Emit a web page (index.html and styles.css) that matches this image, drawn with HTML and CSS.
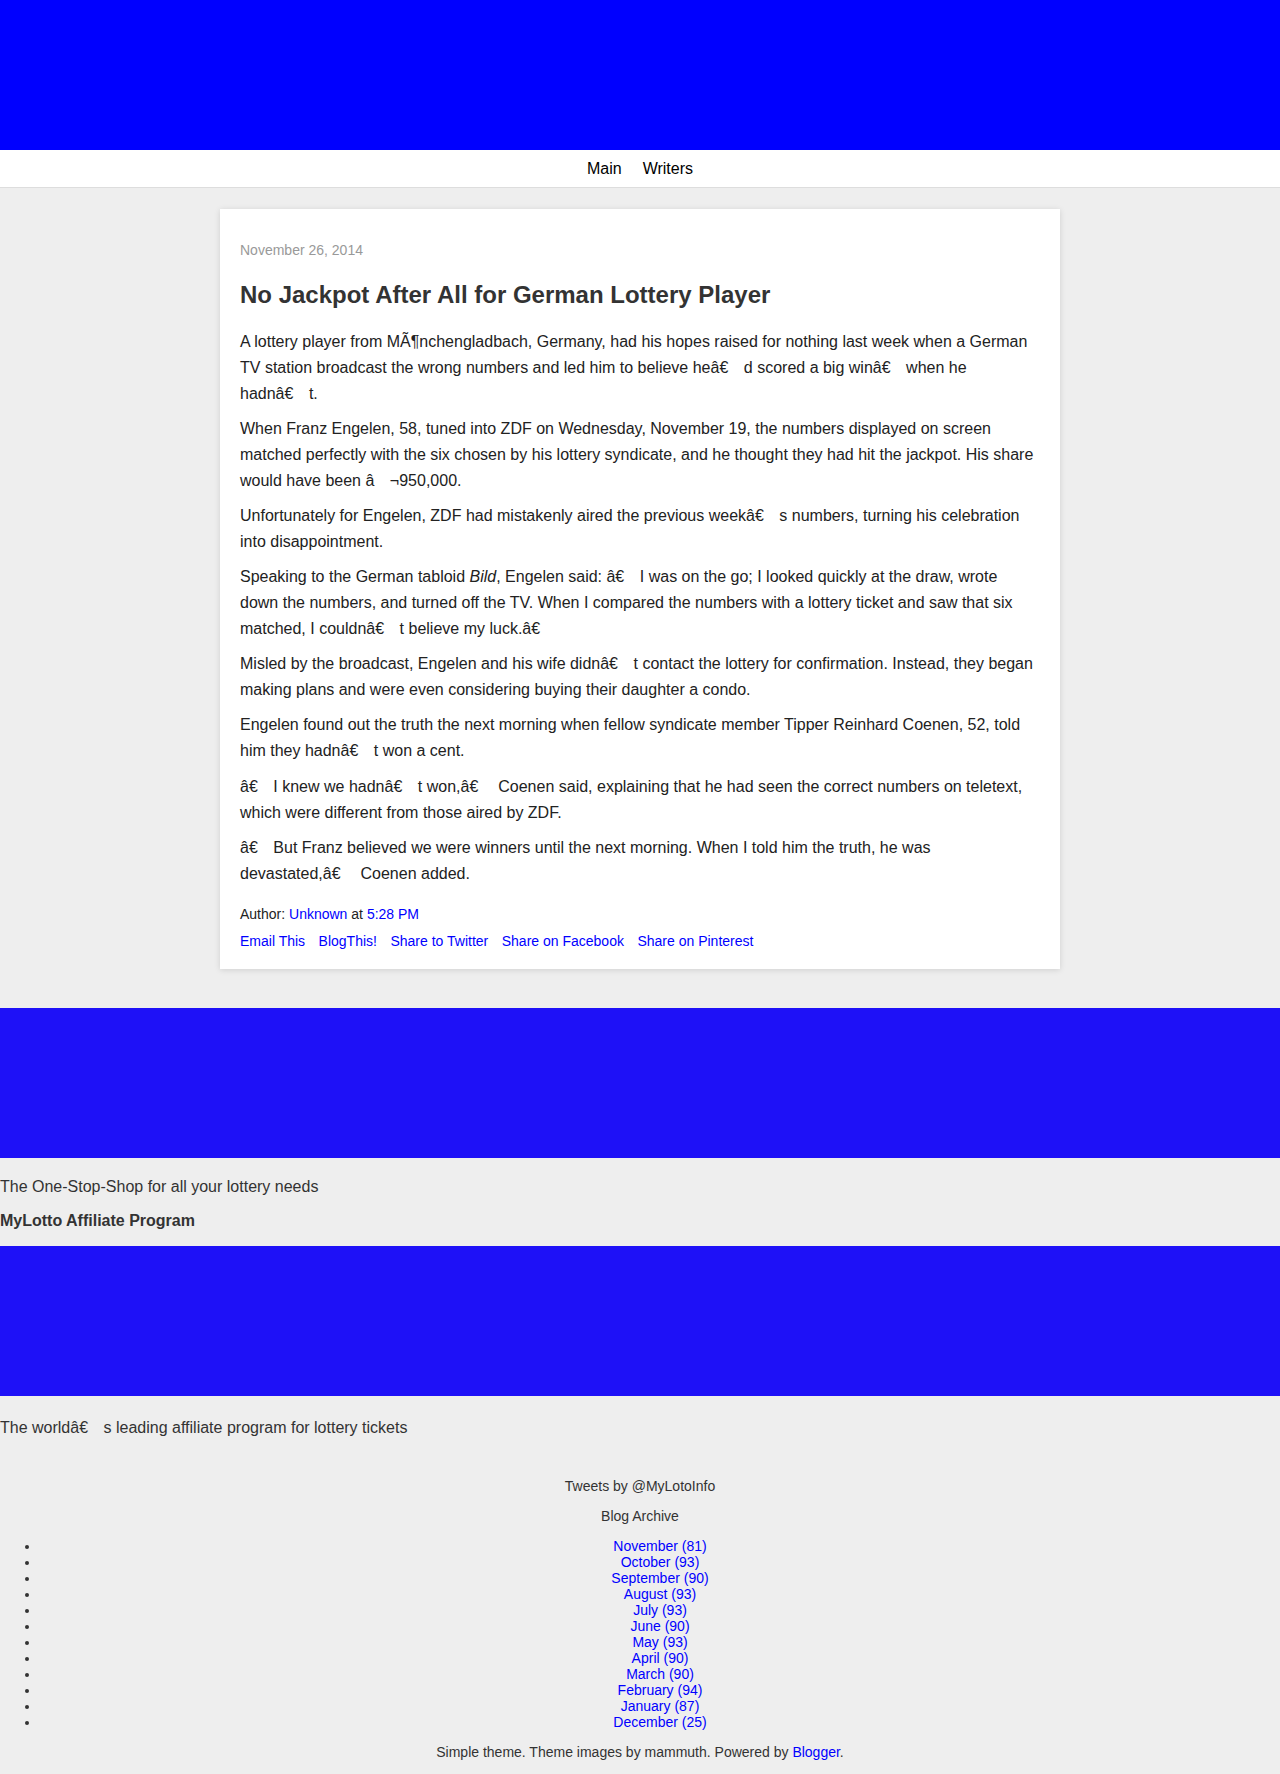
FILE: index.html
```html
<!DOCTYPE html>
<html lang="en">
<head>
<meta charset="utf-8">
<title>No Jackpot After All for German Lottery Player</title>
<link rel="stylesheet" href="styles.css">
</head>
<body>
<header class="header"></header>
<nav class="nav">
  <a class="nav-link" href="#">Main</a>
  <a class="nav-link" href="#">Writers</a>
</nav>
<main class="main">
  <article class="post">
    <div class="post-date">November 26, 2014</div>
    <h3 class="post-title">No Jackpot After All for German Lottery Player</h3>
    <div class="post-body">
      <p>A lottery player from MÃ¶nchengladbach, Germany, had his hopes raised for nothing last week when a German TV station broadcast the wrong numbers and led him to believe heâ€<span class="g"></span>d scored a big winâ€<span class="g"></span>when he hadnâ€<span class="g"></span>t.</p>
      <p>When Franz Engelen, 58, tuned into ZDF on Wednesday, November 19, the numbers displayed on screen matched perfectly with the six chosen by his lottery syndicate, and he thought they had hit the jackpot. His share would have been â<span class="g"></span>¬950,000.</p>
      <p>Unfortunately for Engelen, ZDF had mistakenly aired the previous weekâ€<span class="g"></span>s numbers, turning his celebration into disappointment.</p>
      <p>Speaking to the German tabloid <i>Bild</i>, Engelen said: â€<span class="g"></span>I was on the go; I looked quickly at the draw, wrote down the numbers, and turned off the TV. When I compared the numbers with a lottery ticket and saw that six matched, I couldnâ€<span class="g"></span>t believe my luck.â€<span class="g"></span></p>
      <p>Misled by the broadcast, Engelen and his wife didnâ€<span class="g"></span>t contact the lottery for confirmation. Instead, they began making plans and were even considering buying their daughter a condo.</p>
      <p>Engelen found out the truth the next morning when fellow syndicate member Tipper Reinhard Coenen, 52, told him they hadnâ€<span class="g"></span>t won a cent.</p>
      <p>â€<span class="g"></span>I knew we hadnâ€<span class="g"></span>t won,â€<span class="g"></span> Coenen said, explaining that he had seen the correct numbers on teletext, which were different from those aired by ZDF.</p>
      <p>â€<span class="g"></span>But Franz believed we were winners until the next morning. When I told him the truth, he was devastated,â€<span class="g"></span> Coenen added.</p>
    </div>
    <div class="post-footer">
      <div class="post-author">Author: <a href="#">Unknown</a> at <a href="#">5:28 PM</a></div>
      <div class="post-share">
        <a href="#">Email This</a>
        <a href="#">BlogThis!</a>
        <a href="#">Share to Twitter</a>
        <a href="#">Share on Facebook</a>
        <a href="#">Share on Pinterest</a>
      </div>
    </div>
  </article>
</main>

<section class="widgets">
  <div class="banner banner-first"></div>
  <p class="widget-desc desc-first">The One-Stop-Shop for all your lottery needs</p>
  <h2 class="widget-title">MyLotto Affiliate Program</h2>
  <div class="banner banner-second"></div>
  <p class="widget-desc desc-second">The worldâ€<span class="g"></span>s leading affiliate program for lottery tickets</p>
</section>

<section class="sidebar">
  <div class="side-line tweets">Tweets by @MyLotoInfo</div>
  <div class="side-line archive-title">Blog Archive</div>
  <ul class="archive">
    <li><a href="#">November (81)</a></li>
    <li><a href="#">October (93)</a></li>
    <li><a href="#">September (90)</a></li>
    <li><a href="#">August (93)</a></li>
    <li><a href="#">July (93)</a></li>
    <li><a href="#">June (90)</a></li>
    <li><a href="#">May (93)</a></li>
    <li><a href="#">April (90)</a></li>
    <li><a href="#">March (90)</a></li>
    <li><a href="#">February (94)</a></li>
    <li><a href="#">January (87)</a></li>
    <li><a href="#">December (25)</a></li>
  </ul>
  <div class="side-line attribution">Simple theme. Theme images by mammuth. Powered by <a href="#">Blogger</a>.</div>
</section>
</body>
</html>
```

FILE: styles.css
```css
html, body {
  margin: 0;
  padding: 0;
}

body {
  background: #eeeeee;
  color: #222222;
  font-family: "Liberation Sans", Arial, sans-serif;
  font-size: 16px;
  min-height: 1774px;
}

a {
  color: #0000ff;
  text-decoration: none;
}

.g {
  padding-left: 0.97em;
}

.header {
  height: 150px;
  background: #0000ff;
}

.nav {
  display: flex;
  justify-content: center;
  gap: 21px;
  background: #ffffff;
  border-bottom: 1px solid #dddddd;
  padding: 10px 0 9px;
  line-height: 18px;
  font-size: 16px;
}

.nav-link {
  color: #000000;
}

.main {
  padding-top: 21px;
}

.post {
  box-sizing: border-box;
  width: 840px;
  margin: 0 auto;
  background: #ffffff;
  padding: 31px 24px 18px 20px;
  box-shadow: 0 1px 6px rgba(0, 0, 0, 0.13);
}

.post-date {
  font-size: 14px;
  line-height: 20px;
  color: #999999;
}

.post-title {
  margin: 20px 0 20px;
  font-size: 24px;
  line-height: 29px;
  font-weight: bold;
  color: #333333;
}

.post-body p {
  margin: 0 0 9.1px;
  line-height: 26px;
  font-size: 16px;
}

.post-body p:last-child {
  margin-bottom: 0;
}

.post-footer {
  margin-top: 17.7px;
  font-size: 14px;
  line-height: 20px;
}

.post-share {
  display: flex;
  gap: 13.5px;
  margin-top: 7px;
}

.widgets {
  margin-top: 39px;
}

.banner {
  height: 150px;
  background: #1e11f7;
}

.widget-desc {
  margin: 0;
  font-size: 16px;
  line-height: 19px;
  color: #333333;
}

.desc-first {
  margin-top: 19px;
}

.widget-title {
  margin: 15px 0 15.5px;
  font-size: 16px;
  line-height: 19px;
  font-weight: bold;
  color: #333333;
}

.desc-second {
  margin-top: 22px;
}

.sidebar {
  text-align: center;
  font-size: 14px;
  line-height: 16px;
  color: #333333;
}

.tweets {
  margin-top: 41px;
}

.archive-title {
  margin-top: 14px;
}

.archive {
  margin: 14px 0 0;
  padding-left: 40px;
  list-style: disc outside;
}

.archive li {
  line-height: 16px;
}

.attribution {
  margin-top: 14px;
}
```
